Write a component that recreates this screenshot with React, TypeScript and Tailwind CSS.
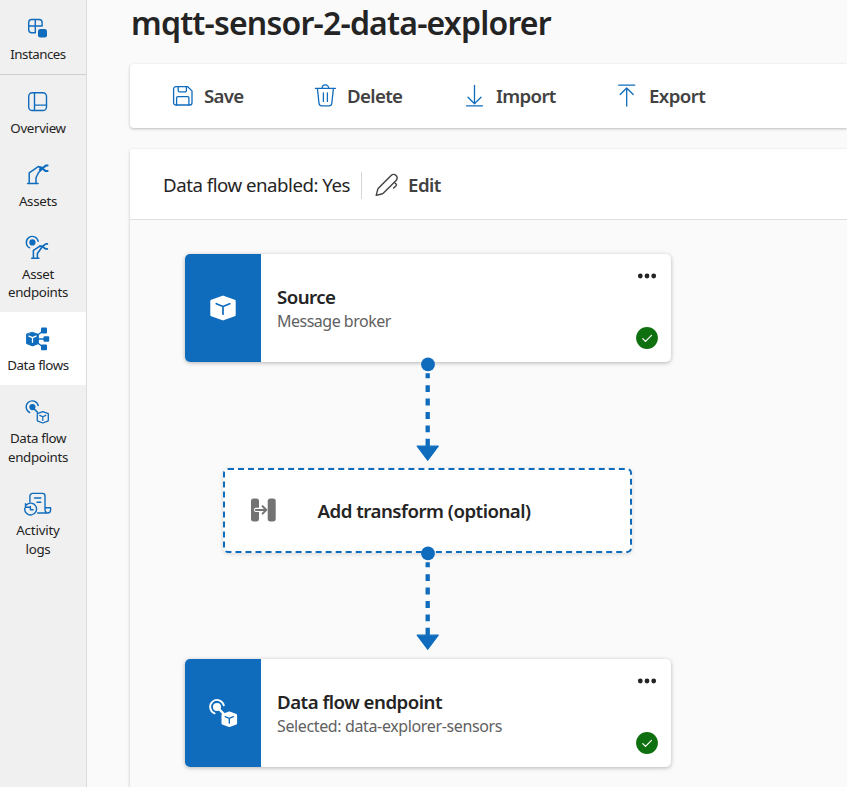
import type { ReactNode } from "react";

const BLUE = "#0f6cbd";

function NavIcon({ children }: { children: ReactNode }) {
  return (
    <svg
      viewBox="0 0 26 26"
      className="h-[26px] w-[26px] shrink-0 overflow-visible"
      fill="none"
      stroke={BLUE}
      strokeWidth="1.4"
      strokeLinecap="round"
      strokeLinejoin="round"
    >
      {children}
    </svg>
  );
}

const InstancesIcon = () => (
  <NavIcon>
    <path d="M10.3 17.7H6.7a3 3 0 0 1-3-3V7.5a3 3 0 0 1 3-3h7.4a3 3 0 0 1 3 3V11H3.7M10.3 4.5v13.2" />
    <rect x="13" y="14" width="9" height="8.6" rx="2.3" fill={BLUE} stroke="none" />
  </NavIcon>
);

const OverviewIcon = () => (
  <NavIcon>
    <rect x="3.7" y="3.7" width="17.8" height="17.8" rx="3.6" />
    <path d="M9.5 3.7v17.8M9.5 16.1h12" />
  </NavIcon>
);

const AssetsIcon = () => (
  <NavIcon>
    <path d="M2.6 21.5H13M4.2 21.3V10.8L13.2 4.6l4 .9M11 21.3v-5.6l2.4-5 3.6-3.6" strokeWidth="1.5" />
    <path d="M22.6 3.6h-1.8l-3.6 2.9-2.4-1M22.6 9.1h-1.9L17 6.2l-2.2 1.6" strokeWidth="2" />
  </NavIcon>
);

const AssetEndpointsIcon = () => (
  <NavIcon>
    <path d="M4.6 12.8a6 6 0 1 1 8.6-6.5" />
    <circle cx="7.4" cy="7.4" r="3.1" fill={BLUE} stroke="none" />
    <path d="M6.7 23.3h7.2M8.4 23v-7.6l6.2-4.1h2M12.4 23v-4.5l4.3-6" strokeWidth="1.6" />
    <path d="M22.3 8.9h-1.4L17 11.8l-2-.8M22.3 13.9h-1.5l-3.5-2.5" strokeWidth="1.8" />
  </NavIcon>
);

const DataFlowsIcon = () => (
  <NavIcon>
    <path d="M10 13h10M10 11l8-6M10 15l8 6" strokeWidth="1.5" />
    <path d="M7.5 6.4 13.4 8.4v9.2l-5.9 2.3-5.9-2.3V8.4z" fill={BLUE} strokeWidth="1" />
    <path d="m3.9 10.1 3.6 1.6 3.6-1.6M7.5 11.8v4.4" stroke="#fff" strokeWidth="1.3" />
    <g fill={BLUE} stroke="none">
      <rect x="16" y="1.6" width="6" height="5.8" rx="1" />
      <rect x="18.5" y="10.2" width="5.7" height="5.6" rx="1" />
      <rect x="16" y="18.6" width="6" height="5.6" rx="1" />
    </g>
  </NavIcon>
);

const DataFlowEndpointsIcon = () => (
  <NavIcon>
    <path d="M4.7 13.5A6.1 6.1 0 1 1 13.2 6.5" />
    <circle cx="7.4" cy="8.1" r="3.1" fill={BLUE} stroke="none" />
    <path d="m8.5 9.3 3.9 4" strokeWidth="1.6" />
    <path d="m17.8 12.6 5.5 2v7.2l-5.5 2.2-5.5-2.2v-7.2z" strokeWidth="1.3" />
    <path d="m14.7 16.4 3.1 1.4 3.1-1.4M17.8 17.8v3.6" strokeWidth="1.2" />
  </NavIcon>
);

const ActivityLogsIcon = () => (
  <NavIcon>
    <path d="M4.9 10.9V5a2.6 2.6 0 0 1 2.6-2.6h9.9A2.6 2.6 0 0 1 20 5v13.5a3.4 3.4 0 0 0 1.6 3M12.7 22h9.9a3 3 0 0 0 3-3v-2.2H20M9.5 7h6.3M12 11.2h3.8" />
    <path d="M1.4 13.9a5.9 5.9 0 1 1-1.6 3.2M.5 12.6v3.6h3.8M5.4 15.4v3.4h2.7" />
  </NavIcon>
);

function NavItem({
  icon,
  lines,
  height,
  active = false,
}: {
  icon: ReactNode;
  lines: { text: string; className: string }[];
  height: string;
  active?: boolean;
}) {
  return (
    <a
      className={`flex w-full shrink-0 flex-col items-center pt-[14px] pr-[10px] ${height} ${active ? "bg-white" : ""}`}
    >
      {icon}
      <span className="mt-1 flex flex-col items-center text-[13.33px] leading-[18.5px] whitespace-nowrap">
        {lines.map((l) => (
          <span key={l.text} className={l.className}>
            {l.text}
          </span>
        ))}
      </span>
    </a>
  );
}

function Sidebar() {
  return (
    <nav className="flex w-[87px] shrink-0 flex-col border-r border-[#dcdcdc] bg-[#f0f0f0] text-[#242424]">
      <div className="h-[75px] border-b border-[#cfcfcf] pt-px">
        <NavItem height="h-[73px]" icon={<InstancesIcon />} lines={[{ text: "Instances", className: "tracking-[-0.5px]" }]} />
      </div>
      <NavItem height="h-[73px]" icon={<OverviewIcon />} lines={[{ text: "Overview", className: "tracking-[-0.35px]" }]} />
      <NavItem height="h-[73px]" icon={<AssetsIcon />} lines={[{ text: "Assets", className: "tracking-[-0.3px]" }]} />
      <NavItem
        height="h-[91px]"
        icon={<AssetEndpointsIcon />}
        lines={[
          { text: "Asset", className: "tracking-[-0.3px]" },
          { text: "endpoints", className: "-mt-px tracking-[-0.35px]" },
        ]}
      />
      <NavItem
        active
        height="h-[73px]"
        icon={<DataFlowsIcon />}
        lines={[{ text: "Data flows", className: "tracking-[-0.4px]" }]}
      />
      <NavItem
        height="h-[92px]"
        icon={<DataFlowEndpointsIcon />}
        lines={[
          { text: "Data flow", className: "tracking-[-0.35px]" },
          { text: "endpoints", className: "tracking-[-0.35px]" },
        ]}
      />
      <NavItem
        height="h-[92px]"
        icon={<ActivityLogsIcon />}
        lines={[
          { text: "Activity", className: "tracking-[-0.2px]" },
          { text: "logs", className: "tracking-[-0.3px]" },
        ]}
      />
    </nav>
  );
}

function ToolIcon({ children }: { children: ReactNode }) {
  return (
    <svg
      viewBox="0 0 24 24"
      className="h-6 w-6 shrink-0"
      fill="none"
      stroke={BLUE}
      strokeWidth="1.3"
      strokeLinecap="round"
      strokeLinejoin="round"
    >
      {children}
    </svg>
  );
}

function Toolbar() {
  return (
    <div className="flex h-16 items-center rounded-l bg-white pl-[41px] text-[18.67px] leading-6 font-semibold text-[#424242] shadow-[0_1px_3px_rgba(0,0,0,0.25)]">
      <button className="flex w-[143px] items-center gap-[9px]">
        <ToolIcon>
          <path d="M4.8 2.7h11.9l4.3 4.2v11.9a2.2 2.2 0 0 1-2.2 2.2H4.8a2.2 2.2 0 0 1-2.2-2.2V4.9a2.2 2.2 0 0 1 2.2-2.2z" />
          <path d="M7.2 2.9v3.7a1.2 1.2 0 0 0 1.2 1.2h5.8a1.2 1.2 0 0 0 1.2-1.2V2.9M5.6 20.9v-7a1.2 1.2 0 0 1 1.2-1.2h9.9a1.2 1.2 0 0 1 1.2 1.2v7" />
        </ToolIcon>
        <span className="tracking-[-0.75px]">Save</span>
      </button>
      <button className="flex w-[149px] items-center gap-[9px]">
        <ToolIcon>
          <path d="M1.4 4.4h20M8.1 4.2a3.3 3.3 0 0 1 6.6 0M3.4 4.6l1.6 14.7a2.9 2.9 0 0 0 2.9 2.6h7a2.9 2.9 0 0 0 2.9-2.6l1.6-14.7M9.4 9v8.4M13.4 9v8.4" />
        </ToolIcon>
        <span className="tracking-[-0.65px]">Delete</span>
      </button>
      <button className="flex w-[153px] items-center gap-[9px]">
        <ToolIcon>
          <path d="M11.5 1.5v18.3M5 13.2l6.5 6.6 6.5-6.6M3.5 21.8h16" />
        </ToolIcon>
        <span className="tracking-[-0.65px]">Import</span>
      </button>
      <button className="flex items-center gap-[9px]">
        <ToolIcon>
          <path d="M10.7 22V4M4.2 10.5 10.7 4l6.5 6.5M2.7 1.2h16" />
        </ToolIcon>
        <span className="tracking-[-0.6px]">Export</span>
      </button>
    </div>
  );
}

function Connector({ className }: { className: string }) {
  return (
    <svg viewBox="0 0 24 108" className={`relative z-10 h-[108px] w-6 shrink-0 overflow-visible ${className}`}>
      <path d="M11.7 11.2v5.1M11.7 23.2v6.9M11.7 36.6v6.9M11.7 50v6.9M11.7 63.4v6.9M11.7 76.8v7.4" stroke={BLUE} strokeWidth="4.3" />
      <path d="M1.2 84.2h21l-10.5 14z" fill={BLUE} stroke={BLUE} strokeWidth="1.3" strokeLinejoin="round" />
      <circle cx="12" cy="2.4" r="6.9" fill={BLUE} />
    </svg>
  );
}

const BrokerIcon = () => (
  <svg viewBox="0 0 28 28" className="h-7 w-7" fill="none" strokeLinecap="round" strokeLinejoin="round">
    <path d="M14 3 25.3 7v14L14 25 2.7 21V7z" fill="#fff" stroke="#fff" strokeWidth="2.8" />
    <path d="m7.3 9.7 6.7 2.8 6.7-2.8M14 12.5v7.7" stroke={BLUE} strokeWidth="1.7" />
  </svg>
);

const EndpointIcon = () => (
  <svg viewBox="0 0 28 28" className="h-7 w-7 overflow-visible" fill="none" stroke="#fff" strokeLinecap="round" strokeLinejoin="round">
    <path d="M5.6 14.3A6.9 6.9 0 1 1 14.8 6.4" strokeWidth="1.9" />
    <circle cx="8" cy="8" r="4" fill="#fff" stroke="none" />
    <path d="m9 9 5.5 5.6" strokeWidth="2.3" />
    <path d="m20.3 13.5 6.8 2.4v8.7l-6.8 2.5-6.8-2.5v-8.7z" fill="#fff" strokeWidth="2" />
    <path d="m16.2 17.7 4.1 1.7 4.1-1.7M20.3 19.4v4.7" stroke={BLUE} strokeWidth="1.4" />
  </svg>
);

function NodeCard({
  icon,
  title,
  titleClass,
  subtitle,
  subtitleClass,
}: {
  icon: ReactNode;
  title: string;
  titleClass: string;
  subtitle: string;
  subtitleClass: string;
}) {
  return (
    <div className="flex h-[108px] w-[486px] shrink-0 overflow-hidden rounded-[5px] bg-white shadow-[0_1px_4px_rgba(0,0,0,0.28)]">
      <div className="flex w-[76px] items-center justify-center bg-[#0f6cbd]">{icon}</div>
      <div className="flex flex-1 flex-col pt-[30px] pl-4 whitespace-nowrap">
        <h3 className={`text-[18.67px] leading-[26px] font-semibold text-[#242424] ${titleClass}`}>{title}</h3>
        <p className={`text-[16px] leading-[22px] text-[#616161] ${subtitleClass}`}>{subtitle}</p>
      </div>
      <div className="flex w-12 flex-col items-center justify-between pt-[18px] pb-[13px]">
        <svg viewBox="0 0 20 8" className="h-2 w-5" fill="#242424">
          <circle cx="3.3" cy="4" r="2.4" />
          <circle cx="10" cy="4" r="2.4" />
          <circle cx="16.7" cy="4" r="2.4" />
        </svg>
        <svg viewBox="0 0 22 22" className="h-[22px] w-[22px]" fill="none">
          <circle cx="11" cy="11" r="10.9" fill="#0f700f" />
          <path d="m6.8 11.6 2.7 2.8 6-6" stroke="#fff" strokeWidth="1.3" strokeLinecap="round" strokeLinejoin="round" />
        </svg>
      </div>
    </div>
  );
}

function TransformSlot() {
  return (
    <div className="mr-px flex h-[85px] w-[409px] shrink-0 items-center rounded-[5px] border-2 border-dashed border-[#0f6cbd] bg-white pl-[26px] shadow-[0_1px_4px_rgba(0,0,0,0.14)]">
      <svg viewBox="0 0 25 24" className="-mt-0.5 h-6 w-[25px] shrink-0" fill="none" strokeLinecap="round" strokeLinejoin="round">
        <rect x="0" y="0.4" width="8" height="23" rx="2.6" fill="#737373" />
        <rect x="16.7" y="0.4" width="8" height="23" rx="2.6" fill="#737373" />
        <path d="M5 11.9h8.5" stroke="#fff" strokeWidth="4.2" />
        <path d="M4.8 11.9h10.2M11.6 8.2l3.7 3.7-3.7 3.7" stroke="#737373" strokeWidth="2" />
      </svg>
      <span className="ml-[41.5px] text-[18.67px] font-semibold whitespace-nowrap tracking-[-0.5px] text-[#242424]">
        Add transform (optional)
      </span>
    </div>
  );
}

export default function App() {
  return (
    <div className="flex h-[787px] w-[847px] overflow-hidden bg-[#fafafa] font-['Noto_Sans','Open_Sans',sans-serif]">
      <Sidebar />
      <main className="flex min-w-0 flex-1 flex-col pl-[43px]">
        <h1 className="h-16 pt-px pl-px text-[32px] leading-[44px] font-semibold whitespace-nowrap tracking-[-0.8px] text-[#242424]">
          mqtt-sensor-2-data-explorer
        </h1>
        <Toolbar />
        <section className="mt-[21px] flex flex-1 flex-col rounded-tl shadow-[0_1px_3px_rgba(0,0,0,0.25)]">
          <header className="flex h-[71px] shrink-0 items-center rounded-tl border-b border-[#dedede] bg-white pt-0.5 pl-[33px] text-[18.67px] leading-6 whitespace-nowrap">
            <span className="w-[198px] tracking-[-0.48px] text-[#242424]">Data flow enabled: Yes</span>
            <span className="h-[27px] w-px bg-[#d6d6d6]" />
            <button className="ml-[13px] flex items-center gap-[9px] font-semibold text-[#424242]">
              <svg viewBox="0 0 24 24" className="h-6 w-6" fill="none" stroke="#424242" strokeWidth="1.4" strokeLinecap="round" strokeLinejoin="round">
                <path d="M16.1 2.4a3.5 3.5 0 0 1 5 5L8.5 20a4 4 0 0 1-1.8 1L1.2 22.4l1.4-5.6a4 4 0 0 1 1-1.8zM19.3 9.2l1.6 1.6a1.5 1.5 0 0 1 0 2.1L18.6 15" />
              </svg>
              <span className="tracking-[-0.5px]">Edit</span>
            </button>
          </header>
          <div className="flex flex-1 flex-col pt-[34px] pl-[55px]">
            <div className="flex w-[486px] flex-col items-center">
              <NodeCard
                icon={<BrokerIcon />}
                title="Source"
                titleClass="tracking-[-0.55px]"
                subtitle="Message broker"
                subtitleClass="tracking-[-0.5px]"
              />
              <Connector className="-mb-0.5" />
              <TransformSlot />
              <Connector className="-mt-0.5" />
              <NodeCard
                icon={<EndpointIcon />}
                title="Data flow endpoint"
                titleClass="tracking-[-0.5px]"
                subtitle="Selected: data-explorer-sensors"
                subtitleClass="tracking-[-0.37px]"
              />
            </div>
          </div>
        </section>
      </main>
    </div>
  );
}
